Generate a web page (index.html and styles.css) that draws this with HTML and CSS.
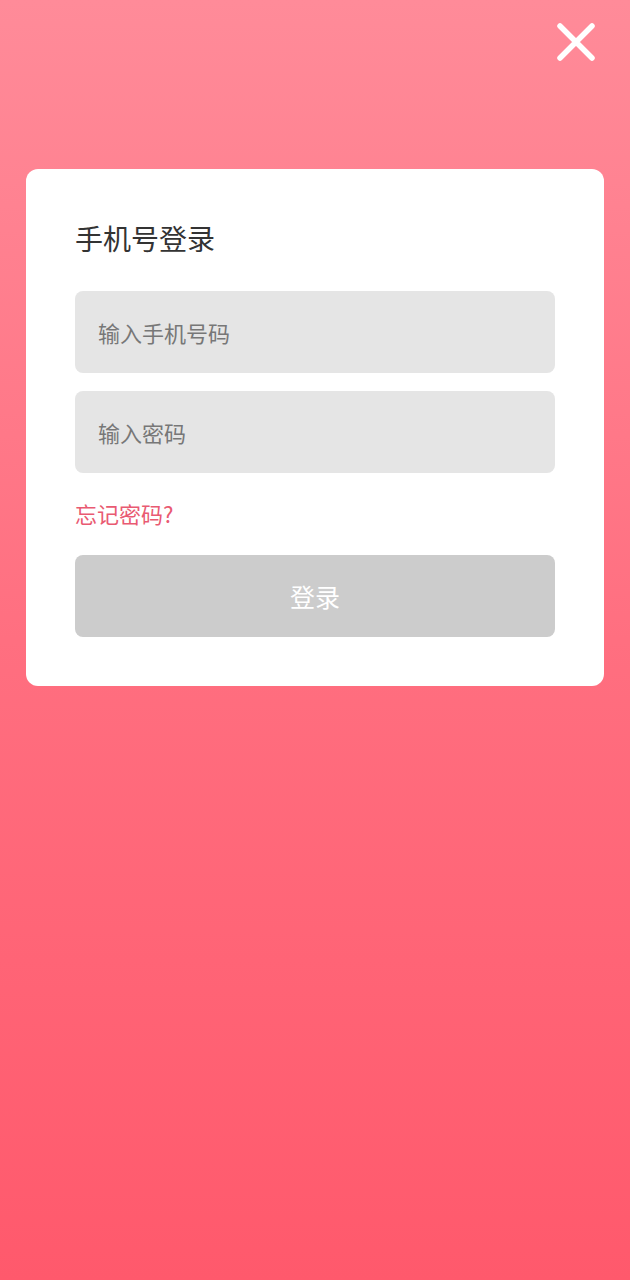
FILE: index.html
```html
<!DOCTYPE html>
<html lang="zh">
<head>
<meta charset="utf-8">
<link rel="stylesheet" href="styles.css">
</head>
<body>
<div class="page">
  <header class="top">
    <button class="close" aria-label="关闭">
      <svg width="40" height="40" viewBox="0 0 40 40"><path d="M4 4 L36 36 M36 4 L4 36" stroke="#fff" stroke-width="5.5" stroke-linecap="round" fill="none"/></svg>
    </button>
  </header>
  <main class="card">
    <h1 class="title">手机号登录</h1>
    <div class="field">输入手机号码</div>
    <div class="field field-second">输入密码</div>
    <div class="forgot">忘记密码?</div>
    <div class="btn">登录</div>
  </main>
</div>
</body>
</html>
```
FILE: styles.css
```css
html, body {
  margin: 0;
  padding: 0;
}
body {
  font-family: "Noto Sans CJK SC", "Noto Sans", sans-serif;
}
.page {
  height: 1280px;
  background: linear-gradient(to bottom, #ff8b99 0%, #ff6f80 50%, #ff596c 100%);
  overflow: hidden;
}
.top {
  height: 169px;
  box-sizing: border-box;
  display: flex;
  justify-content: flex-end;
  align-items: flex-start;
  padding: 22px 34px 0 0;
}
.close {
  width: 40px;
  height: 40px;
  padding: 0;
  border: 0;
  background: none;
  display: block;
}
.close svg { display: block; }
.card {
  margin: 0 26px;
  background: #fff;
  border-radius: 12px;
  padding: 51px 49px 49px;
  display: flex;
  flex-direction: column;
}
.title {
  margin: 0;
  font-size: 28px;
  line-height: 36px;
  font-weight: 400;
  color: #333;
}
.field {
  margin-top: 35px;
  height: 82px;
  border-radius: 8px;
  background: #e5e5e5;
  display: flex;
  align-items: center;
  padding-left: 23px;
  font-size: 22px;
  color: #777;
}
.field-second {
  margin-top: 18px;
}
.forgot {
  margin-top: 25px;
  font-size: 22px;
  line-height: 30px;
  color: #e95a72;
}
.btn {
  margin-top: 27px;
  height: 82px;
  border-radius: 8px;
  background: #cccccc;
  color: #fff;
  font-size: 25px;
  display: flex;
  align-items: center;
  justify-content: center;
}
```
